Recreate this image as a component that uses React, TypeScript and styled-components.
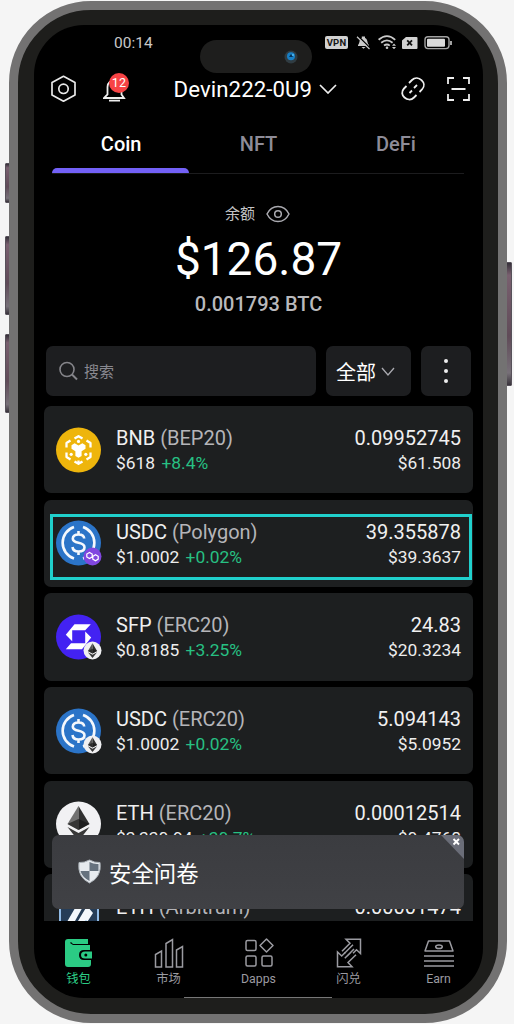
import React from "react";
import styled, { createGlobalStyle } from "styled-components";

const Global = createGlobalStyle`
  * { box-sizing: border-box; }
  body { margin: 0; background: #f5f5f5; font-family: Roboto, "Noto Sans CJK SC", sans-serif; color: #fff; }
  svg { display: block; flex: none; }
`;

const Page = styled.main`
  position: relative;
  width: 514px;
  height: 1024px;
  padding: 1px 7px 1px 9px;
  overflow: hidden;
  background: #f5f5f5;
`;

const SideKey = styled.i<{ $side: "left" | "right"; $top: number; $h: number }>`
  position: absolute;
  ${(p) => p.$side}: ${(p) => (p.$side === "left" ? 5 : 2)}px;
  top: ${(p) => p.$top}px;
  width: 6px;
  height: ${(p) => p.$h}px;
  border-radius: 1px;
  background: linear-gradient(#353039, #79606f 10%, #604b58 60%, #777078 90%, #39333b);
  border: 1px solid #57515a;
`;

const Phone = styled.div`
  position: relative;
  width: 498px;
  height: 1022px;
  border: 9px solid #737272;
  border-radius: 82px;
  background: #1e1e1c;
  padding: 15px 15px 16px 16px;
`;

const Screen = styled.div`
  position: relative;
  display: flex;
  flex-direction: column;
  width: 449px;
  height: 973px;
  border-radius: 50px;
  background: #000;
  overflow: hidden;
`;

const StatusBar = styled.div`
  display: flex;
  align-items: center;
  height: 35px;
  flex: none;
  padding: 0 30px 0 80px;
  font-size: 15.5px;
  letter-spacing: 0;
  color: #c8c8c8;
`;
const StatusIcons = styled.div`
  display: flex;
  align-items: center;
  gap: 8px;
  margin-left: auto;
`;
const Vpn = styled.span`
  width: 23px;
  height: 13px;
  border-radius: 2px;
  background: #d1d1d1;
  color: #161616;
  font: 700 9.5px/13px Roboto, sans-serif;
  letter-spacing: 0.2px;
  text-align: center;
`;
const Notch = styled.div`
  position: absolute;
  left: 166px;
  top: 15px;
  width: 112px;
  height: 33px;
  border-radius: 17px;
  background: #1e1e1d;
  display: flex;
  align-items: center;
  justify-content: flex-end;
  padding-right: 14px;
`;

const Header = styled.header`
  display: flex;
  align-items: center;
  height: 58px;
  flex: none;
  padding: 0 12px 0 16px;
`;
const Bell = styled.div`
  position: relative;
  margin-left: 25px;
`;
const Badge = styled.span`
  position: absolute;
  left: 6px;
  top: -1px;
  width: 20px;
  height: 20px;
  border-radius: 50%;
  background: #f74345;
  font-size: 12.5px;
  line-height: 20px;
  letter-spacing: 0.3px;
  text-align: center;
`;
const Account = styled.div`
  display: flex;
  align-items: center;
  gap: 7px;
  margin-left: 46.5px;
  margin-right: auto;
  font-size: 22.2px;
  line-height: 30px;
  letter-spacing: 0.1px;
`;
const HeaderActions = styled.div`
  display: flex;
  align-items: center;
  gap: 20px;
`;

const Tabs = styled.nav`
  display: flex;
  height: 56px;
  flex: none;
  margin: 0 19px 0 18px;
  border-bottom: 1px solid #1c1c1e;
`;
const Tab = styled.div<{ $on?: boolean }>`
  flex: 1;
  position: relative;
  padding-left: 1px;
  text-align: center;
  font-size: 20px;
  font-weight: 500;
  line-height: 53px;
  color: ${(p) => (p.$on ? "#fff" : "#8e8c98")};
  &::after {
    content: "";
    display: ${(p) => (p.$on ? "block" : "none")};
    position: absolute;
    left: 0;
    right: 0;
    bottom: 0;
    height: 5px;
    border-radius: 5px 5px 0 0;
    background: #7361f7;
  }
`;

const Balance = styled.section`
  display: flex;
  flex-direction: column;
  align-items: center;
  height: 172px;
  flex: none;
  padding: 28px 0 0;
`;
const BalanceLabel = styled.div`
  display: flex;
  align-items: center;
  gap: 11px;
  height: 24px;
  font-size: 15px;
  line-height: 22px;
  color: #c3c3c5;
  padding-right: 2px;
`;
const Total = styled.div`
  font-size: 46px;
  line-height: 66px;
`;
const Btc = styled.div`
  font-size: 20px;
  font-weight: 500;
  line-height: 24px;
  color: #b9b9bc;
`;

const Filters = styled.div`
  display: flex;
  gap: 10px;
  height: 50px;
  flex: none;
  padding: 0 12px;
`;
const Box = styled.div<{ $w: number; $pad?: number; $gap?: number }>`
  display: flex;
  align-items: center;
  justify-content: ${(p) => (p.$pad ? "flex-start" : "center")};
  width: ${(p) => p.$w}px;
  padding-left: ${(p) => p.$pad ?? 0}px;
  gap: ${(p) => p.$gap ?? 0}px;
  border-radius: 7px;
  background: #1d1e20;
  font-size: 20px;
`;
const Placeholder = styled.span`
  padding-bottom: 1px;
  font-size: 15px;
  color: #898990;
`;

const List = styled.div`
  display: flex;
  flex-direction: column;
  gap: 6.5px;
  height: 515px;
  flex: none;
  margin: 10px 10px 0;
  overflow: hidden;
`;
const Row = styled.div`
  display: flex;
  align-items: center;
  height: 87.2px;
  flex: none;
  padding: 0 12px;
  border-radius: 7px;
  background: #1d1f20;
`;
const Coin = styled.div`
  width: 46px;
  height: 46px;
  margin-right: 14px;
  flex: none;
`;
const Info = styled.div<{ $end?: boolean }>`
  flex: ${(p) => (p.$end ? "none" : 1)};
  text-align: ${(p) => (p.$end ? "right" : "left")};
  padding-top: 2px;
  white-space: nowrap;
`;
const Main = styled.div`
  font-size: 20px;
  line-height: 25px;
  color: #f0f0f0;
`;
const Sub = styled.div`
  font-size: 17.4px;
  line-height: 24px;
  color: #ededed;
`;
const Chain = styled.span`
  color: #b5b5b9;
`;
const Gain = styled.span`
  margin-left: 2px;
  color: #27c083;
`;

const Focus = styled.div`
  position: absolute;
  left: 16px;
  top: 489px;
  width: 422px;
  height: 66px;
  border: 3px solid #20d0cc;
`;

const Survey = styled.div`
  position: absolute;
  left: 18px;
  top: 810px;
  width: 412px;
  height: 74px;
  border-radius: 7px;
  background: linear-gradient(#3b3c40, #404145);
  display: flex;
  align-items: center;
  gap: 8px;
  padding: 0 0 1px 26px;
  font-size: 22.4px;
  overflow: hidden;
`;
const Dismiss = styled.svg`
  position: absolute;
  right: 0;
  top: 0;
`;

const Bottom = styled.nav`
  display: flex;
  height: 77px;
  padding: 17px 0 0;
`;
const NavItem = styled.div<{ $on?: boolean }>`
  display: flex;
  flex-direction: column;
  align-items: center;
  gap: 2px;
  width: 90px;
  height: 50px;
  flex: none;
  padding-right: 1px;
  font-size: 12.3px;
  line-height: 18px;
  color: ${(p) => (p.$on ? "#2bcb84" : "#9b9ba1")};
`;
const HomeBar = styled.i`
  position: absolute;
  left: 150px;
  bottom: 0;
  width: 148px;
  height: 1px;
  background: #777;
`;

const Chevron = ({ w, h, sw, color }: { w: number; h: number; sw: number; color: string }) => (
  <svg width={w} height={h} viewBox={`0 0 ${w} ${h}`} fill="none" stroke={color} strokeWidth={sw}>
    <path d={`M1 1L${w / 2} ${h - 1}L${w - 1} 1`} />
  </svg>
);

const EthMark = ({ light }: { light?: boolean }) => (
  <g>
    <path d="M0-17L-11 1L0 7Z" fill={light ? "#717171" : "#555"} />
    <path d="M0-17L11 1L0 7Z" fill="#303030" />
    <path d="M-11 1L0-4L11 1L0 7Z" fill="#151515" opacity=".65" />
    <path d="M-11 4L0 10L11 4L0 18Z" fill="#383838" />
  </g>
);

const EthBadge = () => (
  <g transform="translate(36.5 36.5)">
    <circle r="9" fill="#f0f0f2" />
    <g transform="scale(.42)"><EthMark /></g>
  </g>
);

const UsdcMark = () => (
  <>
    <circle cx="22.5" cy="23" r="22.5" fill="#2b74c8" />
    <g fill="none" stroke="#f5f8fc" strokeWidth="2.6">
      <path d="M18 7A16.6 16.6 0 0 0 18 38.5M27 7A16.6 16.6 0 0 1 27 38.5" />
      <path d="M28.2 18.5C28 15.6 25.7 14.5 22.5 14.5C19 14.5 16.8 16.2 16.8 18.7C16.8 21.4 19 22 22.5 22.7C26.4 23.5 28.5 24.4 28.5 27.3C28.5 30 26.1 31.5 22.5 31.5C18.8 31.5 16.8 29.9 16.5 27M22.5 11V15M22.5 31V35" />
    </g>
  </>
);

type Kind = "bnb" | "usdc-polygon" | "sfp" | "usdc-eth" | "eth" | "arb";

const CoinIcon = ({ kind }: { kind: Kind }) => (
  <svg width="46" height="46" viewBox="0 0 46 46">
    {kind === "bnb" && (
      <>
        <circle cx="22.5" cy="23" r="22.5" fill="#eeb50c" />
        <g fill="none" stroke="#fff" strokeWidth="2.3" strokeLinejoin="round">
          <path d="M18.5 11.6L22.5 9.2L26.5 11.6M14.5 13.5L10.5 16V20.5M30.5 13.5L34.5 16V20.5M10.5 25.5V30L14.5 32.4M34.5 25.5V30L30.5 32.4M18.5 34.4L22.5 36.8L26.5 34.4" />
          <path d="M22.5 33.5V36" />
        </g>
        <path d="M15.5 18.2L18.6 16.3L22.5 18.6L26.4 16.3L29.5 18.2V21.8L25.6 24.2V29L22.5 30.8L19.4 29V24.2L15.5 21.8Z" fill="#fff" />
        <g fill="#fff"><circle cx="22.5" cy="14.4" r="1.6" /><circle cx="15.2" cy="27.3" r="1.6" /><circle cx="29.8" cy="27.3" r="1.6" /></g>
      </>
    )}
    {(kind === "usdc-polygon" || kind === "usdc-eth") && <UsdcMark />}
    {kind === "usdc-polygon" && (
      <g transform="translate(36.5 36.5)">
        <circle r="9" fill="#8147e0" />
        <path d="M-.3-.2V-2.4L-3-4L-5.7-2.4V.4L-3 2L3-1.8L5.7-.2V2.6L3 4.2L.3 2.6V.4" fill="none" stroke="#fff" strokeWidth="1.2" />
      </g>
    )}
    {kind === "sfp" && (
      <>
        <circle cx="22.5" cy="23" r="22.5" fill="#4322f2" />
        <path d="M18.5 10.3H34.8L29.2 16.3H16.2V27.3L9.8 20.8ZM29.2 17.5L35.2 23.5L26 35.3H9.8L15 29.3H29.2Z" fill="#fff" />
      </>
    )}
    {(kind === "sfp" || kind === "usdc-eth") && <EthBadge />}
    {kind === "eth" && (
      <>
        <circle cx="22.5" cy="23" r="22.5" fill="#f1f1f3" />
        <g transform="translate(22.5 22)"><EthMark light /></g>
      </>
    )}
    {kind === "arb" && (
      <>
        <path d="M4 1H42V46H4Z" fill="#263d57" stroke="#91bbe6" strokeWidth="2" />
        <path d="M22 8H29L9 44H1ZM31 11L37 18L19 46H10Z" fill="#f4f8fc" />
        <path d="M30 25L41 46H19Z" fill="#2b92eb" />
      </>
    )}
  </svg>
);

const coins: { kind: Kind; name: string; chain: string; price: string; gain: string; amount: string; value: string }[] = [
  { kind: "bnb", name: "BNB", chain: "BEP20", price: "$618", gain: "+8.4%", amount: "0.09952745", value: "$61.508" },
  { kind: "usdc-polygon", name: "USDC", chain: "Polygon", price: "$1.0002", gain: "+0.02%", amount: "39.355878", value: "$39.3637" },
  { kind: "sfp", name: "SFP", chain: "ERC20", price: "$0.8185", gain: "+3.25%", amount: "24.83", value: "$20.3234" },
  { kind: "usdc-eth", name: "USDC", chain: "ERC20", price: "$1.0002", gain: "+0.02%", amount: "5.094143", value: "$5.0952" },
  { kind: "eth", name: "ETH", chain: "ERC20", price: "$3,330.94", gain: "+30.7%", amount: "0.00012514", value: "$0.4768" },
  { kind: "arb", name: "ETH", chain: "Arbitrum", price: "$3,330.94", gain: "+30.7%", amount: "0.00001474", value: "$0.0491" },
];

const line = { fill: "none", stroke: "currentColor", strokeWidth: 1.5 } as const;

export default function App() {
  return (
    <Page>
      <Global />
      <SideKey $side="left" $top={163} $h={40} />
      <SideKey $side="left" $top={236} $h={79} />
      <SideKey $side="left" $top={334} $h={79} />
      <SideKey $side="right" $top={262} $h={124} />
      <Phone>
        <Screen>
          <StatusBar>
            <span>00:14</span>
            <StatusIcons>
              <Vpn>VPN</Vpn>
              <svg width="97" height="16" viewBox="356 35 97 16">
                <path d="M358 46V45C360 43.5 359 38.5 361.8 38V36.5H365V38C368 39 367 43.5 369 45V46ZM361.5 47H365.5L363.5 48.8Z" fill="#cacaca" />
                <path d="M358 36L370.5 48.5" stroke="#000" strokeWidth="1.6" />
                <path d="M357 36.8L369.5 49" stroke="#cacaca" strokeWidth="1.2" />
                <path d="M378.6 39.8Q387 32.5 395.2 39.8M381.2 42.8Q387 38 392.6 42.8M384 45.6Q387 43.4 389.8 45.6" fill="none" stroke="#cacaca" strokeWidth="1.8" />
                <circle cx="387" cy="47.8" r="1.3" fill="#cacaca" />
                <path d="M392 45.8L394 43.6L396 45.8ZM392 47L394 49.2L396 47Z" fill="#cacaca" />
                <path d="M406 37H416.5Q417.5 37 417.5 38V48Q417.5 49 416.5 49H403Q402 49 402 48V40.5Z" fill="#d2d2d2" />
                <path d="M407.2 40.3L412 45.3M412 40.3L407.2 45.3" stroke="#111" strokeWidth="1.8" />
                <rect x="425" y="36.8" width="24" height="11.8" rx="3" fill="none" stroke="#a2a2a2" strokeWidth="1.4" />
                <rect x="427" y="38.7" width="18" height="8" rx="1" fill="#dadada" />
                <path d="M451 41V45" stroke="#b5b5b5" strokeWidth="1.8" />
              </svg>
            </StatusIcons>
          </StatusBar>
          <Notch>
            <svg width="14" height="14" viewBox="0 0 14 14">
              <circle cx="7" cy="7" r="6.5" fill="#303c42" />
              <circle cx="7" cy="6.3" r="4" fill="#187fc5" />
              <path d="M7 4L9 7H5Z" fill="#073052" />
              <circle cx="9" cy="5" r="1" fill="#55bdf0" />
            </svg>
          </Notch>
          <Header>
            <svg width="28" height="30" viewBox="0 0 28 30" fill="none" stroke="#e8e8e8" strokeWidth="1.7" strokeLinejoin="round">
              <path d="M13.5 2.3L25 8.5V21L13.5 27.2L2 21V8.5Z" />
              <circle cx="13.5" cy="14.8" r="4.7" />
            </svg>
            <Bell>
              <svg width="24" height="30" viewBox="0 0 24 30" fill="none" stroke="#eee" strokeWidth="1.8">
                <path d="M1 24H21L18.5 20.5V13C18.5 4 4.5 4 4.5 13V20.5Z" />
                <path d="M6 26.6H17" />
              </svg>
              <Badge>12</Badge>
            </Bell>
            <Account>
              Devin222-0U9
              <Chevron w={18} h={10} sw={1.7} color="#eee" />
            </Account>
            <HeaderActions>
              <svg width="26" height="26" viewBox="0 0 26 26" fill="none" stroke="#eee" strokeWidth="1.8">
                <path d="M9 7L12 4C18-2 28 7 22 13.5L19.5 16M16.5 19L14 21.5C8 27.5-2 18.5 4 12.5L6.5 10M9.5 17L12 14.5M14 12L17 9" />
              </svg>
              <svg width="25" height="26" viewBox="0 0 25 26" fill="none" stroke="#eee" strokeWidth="1.8">
                <path d="M2 8V2H8M17 2H23V8M23 18V24H17M8 24H2V18M5.5 13H19.5" />
              </svg>
            </HeaderActions>
          </Header>
          <Tabs>
            <Tab $on>Coin</Tab>
            <Tab>NFT</Tab>
            <Tab>DeFi</Tab>
          </Tabs>
          <Balance>
            <BalanceLabel>
              余额
              <svg width="24" height="18" viewBox="0 0 24 18" fill="none" stroke="#aaaab0" strokeWidth="1.5">
                <path d="M1 9C6-1 18-1 23 9C18 19 6 19 1 9Z" /><circle cx="12" cy="9" r="3.3" />
              </svg>
            </BalanceLabel>
            <Total>$126.87</Total>
            <Btc>0.001793 BTC</Btc>
          </Balance>
          <Filters>
            <Box $w={270} $pad={13} $gap={6}>
              <svg width="19" height="20" viewBox="0 0 19 20" fill="none" stroke="#85858a" strokeWidth="1.6">
                <circle cx="8" cy="8.5" r="7" /><path d="M13 13.5L18 18.5" strokeWidth="2" />
              </svg>
              <Placeholder>搜索</Placeholder>
            </Box>
            <Box $w={85} $pad={10} $gap={5}>
              全部
              <Chevron w={14} h={9} sw={1.3} color="#aaaab0" />
            </Box>
            <Box $w={50}>
              <svg width="6" height="26" viewBox="0 0 6 26" fill="#ededed">
                <circle cx="3" cy="3" r="2" /><circle cx="3" cy="13" r="2" /><circle cx="3" cy="23" r="2" />
              </svg>
            </Box>
          </Filters>
          <List>
            {coins.map((c) => (
              <Row key={c.kind}>
                <Coin><CoinIcon kind={c.kind} /></Coin>
                <Info>
                  <Main>{c.name} <Chain>({c.chain})</Chain></Main>
                  <Sub>{c.price} <Gain>{c.gain}</Gain></Sub>
                </Info>
                <Info $end>
                  <Main>{c.amount}</Main>
                  <Sub>{c.value}</Sub>
                </Info>
              </Row>
            ))}
          </List>
          <Bottom>
            <NavItem $on>
              <svg width="30" height="30" viewBox="0 0 30 30">
                <path d="M4 1H24V6H9L7 4L6 5L9 7H26V12H20Q15 12 15 17Q15 22 20 22H27V26Q27 29 24 29H4Q1 29 1 26V4Q1 1 4 1Z" fill="currentColor" />
                <path d="M28 13.5H21Q17 13.5 17 17Q17 20.5 21 20.5H28Z" fill="currentColor" /><circle cx="21.8" cy="17" r="1.5" fill="#000" />
              </svg>
              钱包
            </NavItem>
            <NavItem>
              <svg width="30" height="30" viewBox="0 0 30 30" {...line}>
                <path d="M1.5 29V16.5L7.5 13V29ZM12 29V5.5L18.5 1.5V29ZM22.5 29V12L28.5 8.5V29Z" />
              </svg>
              市场
            </NavItem>
            <NavItem>
              <svg width="30" height="30" viewBox="0 0 30 30" {...line}>
                <rect x="2" y="2.5" width="10" height="10" rx="1.5" /><rect x="2" y="18" width="10" height="10" rx="1.5" />
                <rect x="18" y="18" width="10" height="10" rx="1.5" /><path d="M22.5 1L29 7.5L22.5 14L16 7.5Z" strokeLinejoin="round" />
              </svg>
              Dapps
            </NavItem>
            <NavItem>
              <svg width="30" height="30" viewBox="-2.5 0 30 30" {...line}>
                <path d="M5.5 13.3L13.5 5.3L9.5 1.3H24V15.5L20 11.8L16.5 15.3M19.5 16.7L11.5 24.5L15.5 28.7H1V14L5.2 18L9 14.3" />
                <path d="M8.3 20.3L17.5 11M7.5 15.7L16.5 6.8M10.5 18.2L14.5 14.2" />
              </svg>
              闪兑
            </NavItem>
            <NavItem>
              <svg width="30" height="30" viewBox="0 0 30 30" {...line}>
                <path d="M4.5 3H25.5L29 13H1Z" strokeLinejoin="round" /><ellipse cx="15" cy="8.7" rx="3.3" ry="1.8" />
                <path d="M0 18H30M0 23H30M0 28H30" />
              </svg>
              Earn
            </NavItem>
          </Bottom>
          <Focus />
          <Survey>
            <svg width="23" height="25" viewBox="0 0 23 25">
              <path d="M11.5 1Q17 4 22 3.5Q24 18 11.5 24Q-1 18 1 3.5Q6 4 11.5 1Z" fill="#e7ebef" stroke="#aeb5bb" />
              <path d="M11.5 3Q16 5.5 20.5 5V12H11.5ZM11.5 12V22Q4 18 2.5 12Z" fill="#66727e" />
            </svg>
            安全问卷
            <Dismiss width="24" height="24" viewBox="0 0 24 24">
              <path d="M1 0H24V24Z" fill="#6a6d78" /><path d="M13.5 4L19 9.5M19 4L13.5 9.5" stroke="#fff" strokeWidth="1.9" />
            </Dismiss>
          </Survey>
          <HomeBar />
        </Screen>
      </Phone>
    </Page>
  );
}
